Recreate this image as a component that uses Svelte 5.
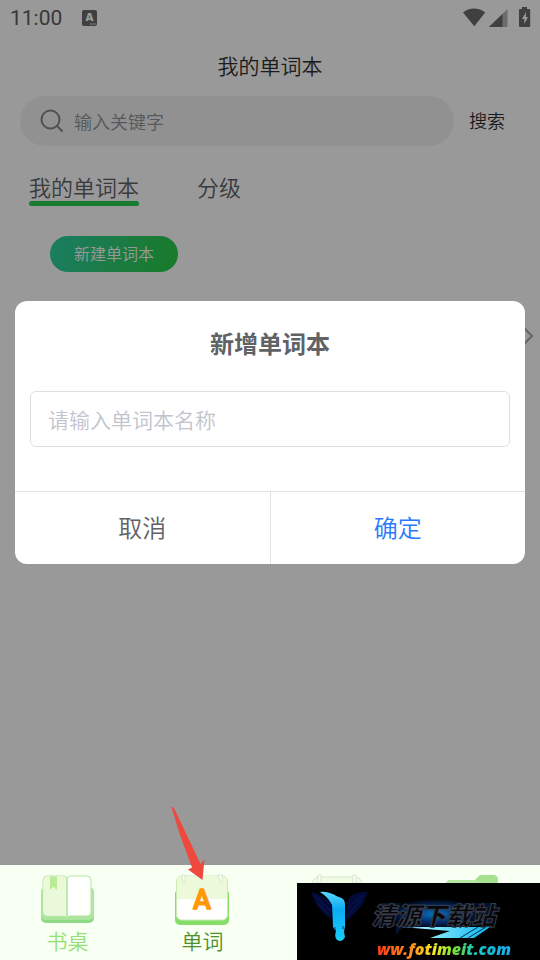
<script>
  const tabs = ['我的单词本', '分级'];
  let active = $state(0);
  let keyword = $state('');
  let name = $state('');
</script>

<div class="screen">
  <main class="page">
    <header class="status">
      <span class="time">11:00</span>
      <svg class="ime" width="16" height="16" viewBox="0 0 16 16" aria-hidden="true">
        <rect width="15" height="16" rx="2" fill="#6b6b6b" />
        <text x="7.5" y="11" text-anchor="middle" font-size="11" font-weight="800" fill="#fff">A</text>
        <path d="M8 14h1.4M10.2 14h1.4M12.4 14h1.4" stroke="#fff" stroke-width="1.2" />
      </svg>
      <svg class="signals" width="68" height="22" viewBox="0 0 68 22" aria-hidden="true">
        <path d="M0 5.5C6 .3 16 .3 22.200 5.500L11.300 19.300Z" fill="#6b6b6b" />
        <path d="M44.500 2V20H26Z" fill="#b5b5b5" />
        <path d="M39.500 7V20H26Z" fill="#6b6b6b" />
        <path d="M59 0h5v2h2.200a1 1 0 0 1 1 1v16a1 1 0 0 1-1 1H57a1 1 0 0 1-1-1V3a1 1 0 0 1 1-1h2Z" fill="#6b6b6b" />
        <path d="M63 5l-4 7h2.300v5l3.700-7h-2.200Z" fill="#fff" />
      </svg>
    </header>

    <h1>我的单词本</h1>

    <form class="search" onsubmit={(e) => e.preventDefault()}>
      <label class="field">
        <svg width="24" height="24" viewBox="0 0 24 24" fill="none" stroke="#858687" stroke-width="2" stroke-linecap="round" aria-hidden="true">
          <circle cx="10.500" cy="10.500" r="9" />
          <path d="M17 17l5 5" />
        </svg>
        <input bind:value={keyword} placeholder="输入关键字" aria-label="输入关键字" />
      </label>
      <button>搜索</button>
    </form>

    <div class="tabs" role="tablist">
      {#each tabs as tab, i}
        <button role="tab" aria-selected={active === i} class:active={active === i} onclick={() => (active = i)}>{tab}</button>
      {/each}
    </div>

    <button class="create">新建单词本</button>

    <div class="row">
      <svg width="12" height="20" viewBox="0 0 12 20" fill="none" stroke="#a8a8a8" stroke-width="2" aria-hidden="true">
        <path d="M1 2l8 8-8 8" />
      </svg>
    </div>

    <div class="mask">
      <div class="dialog" role="dialog" aria-modal="true" aria-labelledby="dialog-title">
        <h2 id="dialog-title">新增单词本</h2>
        <input bind:value={name} placeholder="请输入单词本名称" aria-label="请输入单词本名称" />
        <div class="actions">
          <button>取消</button>
          <button class="confirm">确定</button>
        </div>
      </div>
    </div>
  </main>

  <nav>
    <a href="#desk">
      <svg width="56" height="52" viewBox="0 0 56 52" aria-hidden="true">
        <rect x="1" y="15" width="53" height="35" rx="5" fill="#8fda85" />
        <rect x="1" y="14" width="53" height="33" rx="5" fill="#ace59d" />
        <path d="M7 3H24Q27 3 27 7Q27 3 30 3H47Q51 3 51 7V39Q51 43 47 43H30Q27 43 27 44Q27 43 24 43H7Q3 43 3 39V7Q3 3 7 3Z" fill="#fdfffc" stroke="#b8e5a4" />
        <path d="M7 3.500H23Q26 3.500 26 7V42.500H7Q3.500 42.500 3.500 39V7Q3.500 3.500 7 3.500Z" fill="#e9f9da" />
        <path d="M27 6V44" stroke="#c2e9af" stroke-width="2" />
        <path d="M10 3.500h7V17l-3.500-3.500L10 17Z" fill="#bce994" />
      </svg>
      <span>书桌</span>
    </a>
    <a href="#words" class="current">
      <svg width="56" height="52" viewBox="0 0 56 52" aria-hidden="true">
        <rect x="0" y="16" width="54" height="36" rx="5" fill="#86dd68" />
        <rect x="1.500" y="3" width="51" height="44" rx="5" fill="#fff" stroke="#cbe9b5" />
        <path d="M2 26V8Q2 3.500 6.500 3.500H47.500Q52 3.500 52 8V26Z" fill="#edfad9" />
        <g fill="#fff" stroke="#c9dfb7" stroke-width=".7">
          <path d="M7 2h3v6q0 2-2 2Z" />
          <path d="M43 2h4v7q-2 1-2-1Z" />
        </g>
        <text x="27" y="36" text-anchor="middle" font-size="27" font-weight="500" fill="#ff9908" stroke="#ff9908" stroke-width="1.500" stroke-linejoin="round">A</text>
      </svg>
      <span>单词</span>
    </a>
    <a href="#calendar" aria-label="calendar">
      <svg width="56" height="52" viewBox="0 0 56 52" aria-hidden="true">
        <rect x="2" y="4" width="50" height="44" rx="7" fill="#f0fbe4" stroke="#d5e9c8" />
        <path d="M8 2h3v8H8ZM43 2h3v8h-3Z" fill="#fff" stroke="#d5e3cc" />
      </svg>
    </a>
    <a href="#files" aria-label="files">
      <svg width="56" height="52" viewBox="0 0 56 52" aria-hidden="true">
        <path d="M1 12Q1 7 6 7H30L35 2H48Q53 2 53 7V46H1Z" fill="#a5e18e" />
        <path d="M1 12Q1 7 6 7H31L36 10H53V46H1Z" fill="#b5e6a0" />
      </svg>
    </a>
    <svg class="pointer" width="50" height="78" viewBox="0 0 50 78" aria-hidden="true">
      <path d="M9.500 4Q11 3 13 7L38.500 61L42.500 56L40.500 77L26 66.500L30 64.500L18 32Z" fill="#ef493e" />
    </svg>
  </nav>

  <aside class="mark">
    <svg class="emblem" width="243" height="77" viewBox="0 0 243 77" aria-hidden="true">
      <defs>
        <linearGradient id="beam" x2="0" y2="1">
          <stop offset="0" stop-color="#58d7ff" />
          <stop offset=".35" stop-color="#0cabf5" />
          <stop offset="1" stop-color="#18cdf5" />
        </linearGradient>
        <linearGradient id="slash">
          <stop offset="0" stop-color="#2463dc" />
          <stop offset=".25" stop-color="#9af0ff" />
          <stop offset="1" stop-color="#08b6ee" />
        </linearGradient>
        <radialGradient id="halo">
          <stop offset="0" stop-color="#0873be" />
          <stop offset=".55" stop-color="#042b69" />
          <stop offset="1" stop-color="#000" />
        </radialGradient>
      </defs>
      <path d="M14 9Q23 11 34 20V36Q20 28 14 9ZM71 9Q53 8 50 20L49 38Q65 27 71 9Z" fill="#020b38" />
      <path d="M17 12L34 28M21 20L33 33M66 12L51 25M64 17L50 34" stroke="#07195b" fill="none" />
      <path d="M23 9C33 8 38 13 42 14Q48 15 48 22V43L47 49L48 54Q45 60 40 57Q37 54 39 48L36 44L35 22Q31 14 23 9Z" fill="url(#beam)" />
      <path d="M38 44v4M46 43v3" stroke="#033a71" />
      <path d="M77 43L84 20H200L197 42L105 45L99 52V43Z" fill="#071944" opacity=".7" />
      <ellipse cx="138" cy="31" rx="50" ry="15" fill="url(#halo)" />
      <path d="M104 44H193L177 55H133L153 48Z" fill="url(#slash)" />
      <path d="M163 55L181 44M171 55L189 44" stroke="#033052" />
    </svg>
    <strong>清源下载站</strong>
    <span class="site">ww.fotimeit.com</span>
  </aside>
</div>

<style>
  :global(body) {
    margin: 0;
    background: #fff;
  }
  .screen {
    position: relative;
    display: flex;
    flex-direction: column;
    min-height: 100vh;
    overflow: hidden;
    font-family: "Noto Sans", "Noto Sans CJK SC", sans-serif;
  }
  .screen :is(button, input) {
    font-family: "Noto Sans CJK SC", sans-serif;
    font-weight: 350;
    border: 0;
    padding: 0;
    background: none;
  }
  .page {
    position: relative;
    flex: 1;
    background: #fff;
  }
  .status {
    display: flex;
    align-items: center;
    height: 36px;
    padding: 0 9px 0 10px;
  }
  .time {
    font: 400 21px/36px Roboto, sans-serif;
    color: #606060;
  }
  .ime {
    margin-left: 20px;
    font-family: "Open Sans", sans-serif;
  }
  .signals {
    margin-left: auto;
  }
  h1 {
    margin: 0;
    padding-bottom: 2px;
    text-align: center;
    font: 350 21px/58px "Noto Sans CJK SC", sans-serif;
    color: #303030;
  }
  .search {
    display: flex;
    align-items: center;
    padding: 0 35px 0 20px;
    gap: 15px;
  }
  .field {
    display: flex;
    flex: 1;
    align-items: center;
    height: 50px;
    border-radius: 25px;
    background: #f2f2f2;
    padding: 0 20px;
    gap: 10px;
  }
  .field input {
    flex: 1;
    min-width: 0;
    height: 40px;
    font-size: 18px;
    color: #303030;
    outline: none;
  }
  .field input::placeholder {
    color: #909399;
    opacity: 1;
  }
  .screen .search button {
    padding-bottom: 2px;
    font-size: 18px;
    color: #303030;
  }
  .tabs {
    display: flex;
    gap: 58px;
    padding: 24px 29px 0;
  }
  .screen .tabs button {
    position: relative;
    box-sizing: border-box;
    height: 36px;
    padding-bottom: 4px;
    font-size: 22px;
    line-height: 32px;
    color: #606266;
  }
  .tabs button.active::after {
    content: "";
    position: absolute;
    left: 0;
    right: 0;
    bottom: 0;
    height: 5px;
    border-radius: 3px;
    background: #2bcd50;
  }
  .screen .create {
    display: block;
    margin: 30px 0 0 50px;
    padding: 0 24px 2px;
    height: 36px;
    border-radius: 18px;
    background: linear-gradient(110deg, #2fd0a4, #2bcd44);
    color: #fff;
    font-size: 16px;
  }
  .row {
    display: flex;
    justify-content: flex-end;
    padding: 54px 5px;
  }
  .mask {
    position: absolute;
    inset: 0;
    display: flex;
    align-items: center;
    justify-content: center;
    padding: 0 15px;
    background: rgb(0 0 0 / 40%);
  }
  .dialog {
    flex: 1;
    border-radius: 12px;
    background: #fff;
    overflow: hidden;
  }
  h2 {
    margin: 0;
    padding: 24px 0 30px;
    text-align: center;
    font: 600 24px/36px "Noto Sans CJK SC", sans-serif;
    color: #606266;
  }
  .screen .dialog input {
    display: block;
    box-sizing: border-box;
    width: calc(100% - 30px);
    height: 56px;
    margin: 0 15px 44px;
    padding: 0 17px;
    border: 1px solid #dcdfe6;
    border-radius: 6px;
    font-size: 21px;
    outline: none;
  }
  .dialog input::placeholder {
    color: #c0c4cc;
    opacity: 1;
  }
  .actions {
    display: flex;
    border-top: 1px solid #e0e1e3;
  }
  .screen .actions button {
    flex: 1;
    box-sizing: border-box;
    height: 72px;
    padding-bottom: 4px;
    font-size: 24px;
    color: #606266;
  }
  .screen .actions .confirm {
    border-left: 1px solid #e0e1e3;
    color: #2979ff;
  }
  nav {
    position: relative;
    display: flex;
    height: 95px;
    background: #f8fff3;
  }
  nav a {
    display: flex;
    flex: 1;
    flex-direction: column;
    align-items: center;
    padding-top: 8px;
    color: #94e071;
    text-decoration: none;
    font: 350 21px/30px "Noto Sans CJK SC", sans-serif;
  }
  nav a.current {
    color: #4f8f2b;
  }
  nav a svg {
    flex: none;
    font-family: Roboto, sans-serif;
  }
  .pointer {
    position: absolute;
    left: 162px;
    top: -62px;
  }
  .mark {
    position: absolute;
    right: 0;
    bottom: 0;
    width: 243px;
    height: 77px;
    background: #000;
  }
  .emblem {
    position: absolute;
    inset: 0;
  }
  .mark strong {
    position: absolute;
    left: 74px;
    top: 13px;
    font: italic 900 25px/36px "Noto Sans CJK SC", sans-serif;
    color: #05070d;
    -webkit-text-stroke: 1px #3b3e49;
  }
  .site {
    position: absolute;
    left: 80px;
    top: 55px;
    font: italic 800 16px/22px "Open Sans", sans-serif;
    background: linear-gradient(90deg, #ff3d16, #ff8a18 25%, #f5ed20 42%, #75df35 58%, #12cbbd 72%, #18aef5);
    background-clip: text;
    color: transparent;
  }
</style>
